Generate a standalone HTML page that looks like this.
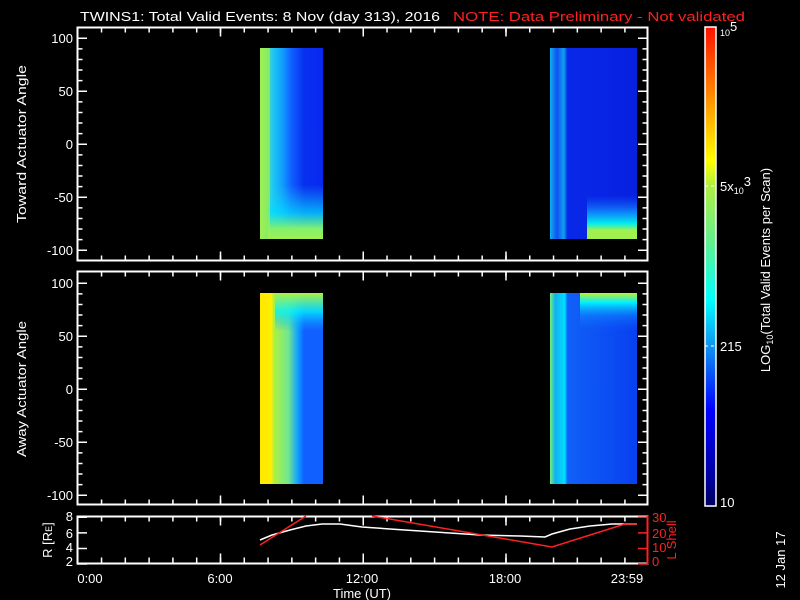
<!DOCTYPE html>
<html><head><meta charset="utf-8"><style>
html,body{margin:0;padding:0;background:#000;width:800px;height:600px;overflow:hidden}
svg{display:block}
text{font-family:"Liberation Sans",sans-serif;font-size:13px;fill:#fff}
</style></head><body>
<svg width="800" height="600" viewBox="0 0 800 600" xmlns="http://www.w3.org/2000/svg">
<defs>
<linearGradient id="cb" x1="0" y1="1" x2="0" y2="0">
<stop offset="0" stop-color="#000060"/><stop offset="0.06" stop-color="#0000a0"/><stop offset="0.2" stop-color="#0000ff"/>
<stop offset="0.33" stop-color="#1090f0"/><stop offset="0.43" stop-color="#00ffff"/><stop offset="0.55" stop-color="#60f090"/>
<stop offset="0.67" stop-color="#b0f040"/><stop offset="0.72" stop-color="#ffff00"/><stop offset="0.85" stop-color="#ff9000"/>
<stop offset="1" stop-color="#ff1000"/></linearGradient>
<linearGradient id="a1" x1="0" y1="0" x2="1" y2="0">
<stop offset="0" stop-color="#a0f050"/><stop offset="0.1" stop-color="#60e890"/><stop offset="0.2" stop-color="#20c8f0"/>
<stop offset="0.35" stop-color="#10a0ff"/><stop offset="0.5" stop-color="#1060ff"/><stop offset="0.7" stop-color="#0830f0"/><stop offset="1" stop-color="#0828f0"/></linearGradient>
<linearGradient id="a1b" x1="0" y1="0" x2="0" y2="1">
<stop offset="0" stop-color="#20d0f0" stop-opacity="0"/><stop offset="0.5" stop-color="#00e0ff" stop-opacity="0.7"/><stop offset="0.8" stop-color="#80f070"/><stop offset="1" stop-color="#a0f050"/></linearGradient>
<linearGradient id="a2" x1="0" y1="0" x2="1" y2="0">
<stop offset="0" stop-color="#10b0f0"/><stop offset="0.08" stop-color="#1050f0"/><stop offset="0.16" stop-color="#10a0f0"/><stop offset="0.2" stop-color="#0828e8"/><stop offset="1" stop-color="#0820e0"/></linearGradient>
<linearGradient id="a2b" x1="0" y1="0" x2="0" y2="1">
<stop offset="0" stop-color="#1060ff" stop-opacity="0"/><stop offset="0.4" stop-color="#10a0ff" stop-opacity="0.8"/><stop offset="0.65" stop-color="#00f0f0"/><stop offset="0.8" stop-color="#a0f050"/><stop offset="1" stop-color="#a0f050"/></linearGradient>
<linearGradient id="b1" x1="0" y1="0" x2="1" y2="0">
<stop offset="0" stop-color="#ffe800"/><stop offset="0.18" stop-color="#ffee00"/><stop offset="0.22" stop-color="#b0f040"/>
<stop offset="0.45" stop-color="#70e890"/><stop offset="0.6" stop-color="#10a0ff"/><stop offset="0.7" stop-color="#1060ff"/><stop offset="1" stop-color="#1060ff"/></linearGradient>
<linearGradient id="b1t" x1="0" y1="0" x2="0" y2="1">
<stop offset="0" stop-color="#b0f040"/><stop offset="0.1" stop-color="#00f0ff" stop-opacity="0.8"/><stop offset="0.2" stop-color="#10a0ff" stop-opacity="0"/></linearGradient>
<linearGradient id="b2" x1="0" y1="0" x2="1" y2="0">
<stop offset="0" stop-color="#70f080"/><stop offset="0.06" stop-color="#10b0f0"/><stop offset="0.17" stop-color="#00e0ff"/><stop offset="0.2" stop-color="#1060f8"/><stop offset="1" stop-color="#0840f0"/></linearGradient>
<linearGradient id="b2t" x1="0" y1="0" x2="0" y2="1">
<stop offset="0" stop-color="#c0f030"/><stop offset="0.05" stop-color="#00f0ff"/><stop offset="0.12" stop-color="#1090ff" stop-opacity="0.5"/><stop offset="0.2" stop-color="#1060ff" stop-opacity="0"/></linearGradient>
</defs>

<text x="80" y="21" font-size="14" textLength="360" lengthAdjust="spacingAndGlyphs">TWINS1: Total Valid Events:  8 Nov (day 313), 2016</text>
<text x="453" y="21" font-size="14" style="fill:#ff2020" textLength="292" lengthAdjust="spacingAndGlyphs">NOTE: Data Preliminary - Not validated</text>

<!-- panel 1 data -->
<rect x="260" y="48" width="63" height="191" fill="url(#a1)"/>
<rect x="268" y="185" width="55" height="54" fill="url(#a1b)"/>
<rect x="260" y="48" width="10" height="191" fill="#a0f050" opacity="0.7"/>
<rect x="550" y="48" width="87" height="191" fill="url(#a2)"/>
<rect x="587" y="195" width="50" height="44" fill="url(#a2b)"/>
<!-- panel 2 data -->
<rect x="260" y="293" width="63" height="191" fill="url(#b1)"/>
<rect x="275" y="293" width="48" height="191" fill="url(#b1t)"/>
<rect x="550" y="293" width="87" height="191" fill="url(#b2)"/>
<rect x="580" y="293" width="57" height="191" fill="url(#b2t)"/>

<g stroke="#fff" fill="none">
<rect x="77.5" y="27.5" width="570" height="233" stroke-width="2"/>
<rect x="77.5" y="271.5" width="570" height="233" stroke-width="2"/>
<rect x="77.5" y="516.5" width="570" height="47" stroke-width="2"/>
<line x1="77" y1="30" x2="648" y2="30" stroke-width="5" stroke-dasharray="1.5 22.29"/>
<line x1="77" y1="258" x2="648" y2="258" stroke-width="5" stroke-dasharray="1.5 22.29"/>
<line x1="77" y1="274" x2="648" y2="274" stroke-width="5" stroke-dasharray="1.5 22.29"/>
<line x1="77" y1="502" x2="648" y2="502" stroke-width="5" stroke-dasharray="1.5 22.29"/>
<line x1="77" y1="519" x2="648" y2="519" stroke-width="5" stroke-dasharray="1.5 22.29"/>
<line x1="77" y1="560" x2="648" y2="560" stroke-width="5" stroke-dasharray="1.5 22.29"/>
<line x1="77" y1="32" x2="648" y2="32" stroke-width="9" stroke-dasharray="1.5 141.25"/>
<line x1="77" y1="256" x2="648" y2="256" stroke-width="9" stroke-dasharray="1.5 141.25"/>
<line x1="77" y1="276" x2="648" y2="276" stroke-width="9" stroke-dasharray="1.5 141.25"/>
<line x1="77" y1="500" x2="648" y2="500" stroke-width="9" stroke-dasharray="1.5 141.25"/>
<line x1="77" y1="521" x2="648" y2="521" stroke-width="9" stroke-dasharray="1.5 141.25"/>
<line x1="77" y1="558" x2="648" y2="558" stroke-width="9" stroke-dasharray="1.5 141.25"/>
<line x1="80" y1="37.5" x2="80" y2="252" stroke-width="5" stroke-dasharray="1.5 9.1"/>
<line x1="645" y1="37.5" x2="645" y2="252" stroke-width="5" stroke-dasharray="1.5 9.1"/>
<line x1="82" y1="37.5" x2="82" y2="252" stroke-width="10" stroke-dasharray="1.5 51.5"/>
<line x1="643" y1="37.5" x2="643" y2="252" stroke-width="10" stroke-dasharray="1.5 51.5"/>
<line x1="80" y1="282.5" x2="80" y2="497" stroke-width="5" stroke-dasharray="1.5 9.1"/>
<line x1="645" y1="282.5" x2="645" y2="497" stroke-width="5" stroke-dasharray="1.5 9.1"/>
<line x1="82" y1="282.5" x2="82" y2="497" stroke-width="10" stroke-dasharray="1.5 51.5"/>
<line x1="643" y1="282.5" x2="643" y2="497" stroke-width="10" stroke-dasharray="1.5 51.5"/>
<line x1="82" y1="516.5" x2="82" y2="565" stroke-width="10" stroke-dasharray="1.5 14.1"/>
</g>
<line x1="643" y1="516.5" x2="643" y2="565" stroke="#ff2020" stroke-width="10" stroke-dasharray="1.5 14.1"/>
<line x1="647.5" y1="516" x2="647.5" y2="564" stroke="#ff2020" stroke-width="2"/>

<polyline fill="none" stroke="#fff" stroke-width="1.5" points="260,540 272,535 290,530 306,526 322,524 340,524 362,527 390,529 420,531 450,533 480,535 520,536 545,537 552,534 570,529 590,526 612,524 637,524"/>
<polyline fill="none" stroke="#ff2020" stroke-width="1.5" points="260,545 306,516"/>
<polyline fill="none" stroke="#ff2020" stroke-width="1.5" points="372,516 552,547 590,535 625,524 637,524"/>

<g text-anchor="end">
<text x="73" y="43">100</text><text x="73" y="96">50</text><text x="73" y="149">0</text><text x="73" y="202">-50</text><text x="73" y="255">-100</text>
<text x="73" y="288">100</text><text x="73" y="341">50</text><text x="73" y="394">0</text><text x="73" y="447">-50</text><text x="73" y="500">-100</text>
<text x="73" y="521">8</text><text x="73" y="538">6</text><text x="73" y="552">4</text><text x="73" y="566">2</text>
</g>
<text x="652" y="522" style="fill:#ff2020">30</text><text x="652" y="538" style="fill:#ff2020">20</text><text x="652" y="552" style="fill:#ff2020">10</text><text x="652" y="566" style="fill:#ff2020">0</text>
<text transform="translate(676,540) rotate(-90)" text-anchor="middle" style="fill:#ff2020">L Shell</text>
<text transform="translate(52,540) rotate(-90)" text-anchor="middle">R [R<tspan font-size="9">E</tspan>]</text>
<text transform="translate(26,144) rotate(-90)" text-anchor="middle" textLength="158" lengthAdjust="spacingAndGlyphs">Toward Actuator Angle</text>
<text transform="translate(26,389) rotate(-90)" text-anchor="middle" textLength="136" lengthAdjust="spacingAndGlyphs">Away Actuator Angle</text>

<g text-anchor="middle">
<text x="90" y="583">0:00</text><text x="220" y="583">6:00</text><text x="362" y="583">12:00</text><text x="505" y="583">18:00</text><text x="627" y="583">23:59</text>
<text x="362" y="598">Time (UT)</text>
</g>

<rect x="705" y="27" width="11" height="479" fill="url(#cb)" stroke="#fff" stroke-width="1.5"/>
<line x1="705" y1="186" x2="716" y2="186" stroke="#fff" stroke-dasharray="3 3"/>
<line x1="705" y1="346" x2="716" y2="346" stroke="#fff" stroke-dasharray="3 3"/>
<text x="720" y="36"><tspan font-size="9">10</tspan><tspan dy="-5">5</tspan></text>
<text x="720" y="191">5x<tspan font-size="9" dy="3">10</tspan><tspan dy="-8">3</tspan></text>
<text x="720" y="351">215</text>
<text x="720" y="507">10</text>
<text transform="translate(770,270) rotate(-90)" text-anchor="middle">LOG<tspan font-size="9" dy="3">10</tspan><tspan dy="-3">(Total Valid Events per Scan)</tspan></text>
<text transform="translate(785,560) rotate(-90)" text-anchor="middle" font-size="10">12 Jan 17</text>
</svg>
</body></html>
